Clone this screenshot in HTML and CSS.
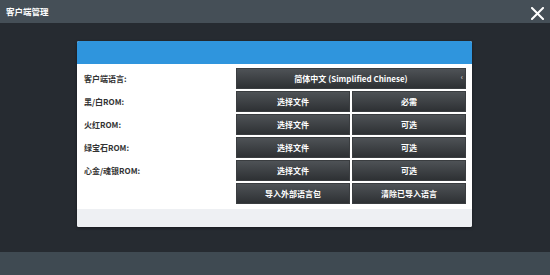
FILE: index.html
```html
<!DOCTYPE html>
<html lang="zh-CN">
<head>
  <meta charset="UTF-8">
  <title>客户端管理</title>
  <link rel="stylesheet" href="styles.css">
</head>
<body>
  <div class="topbar">
    <span class="title">客户端管理</span>
    <svg class="close" width="13" height="13" viewBox="0 0 13 13">
      <path d="M1 1 L12 12 M12 1 L1 12" stroke="#fff" stroke-width="2" stroke-linecap="square"/>
    </svg>
  </div>
  <div class="main">
    <div class="dialog">
      <div class="dialog-head"></div>
      <div class="dialog-body">
        <div class="row">
          <span class="label">客户端语言:</span>
          <div class="btns">
            <button class="btn">简体中文 (Simplified Chinese)<span class="caret">‹</span></button>
          </div>
        </div>
        <div class="row">
          <span class="label">黑/白ROM:</span>
          <div class="btns">
            <button class="btn">选择文件</button>
            <button class="btn">必需</button>
          </div>
        </div>
        <div class="row">
          <span class="label">火红ROM:</span>
          <div class="btns">
            <button class="btn">选择文件</button>
            <button class="btn">可选</button>
          </div>
        </div>
        <div class="row">
          <span class="label">绿宝石ROM:</span>
          <div class="btns">
            <button class="btn">选择文件</button>
            <button class="btn">可选</button>
          </div>
        </div>
        <div class="row">
          <span class="label">心金/魂银ROM:</span>
          <div class="btns">
            <button class="btn">选择文件</button>
            <button class="btn">可选</button>
          </div>
        </div>
        <div class="row">
          <span class="label"></span>
          <div class="btns">
            <button class="btn">导入外部语言包</button>
            <button class="btn">清除已导入语言</button>
          </div>
        </div>
      </div>
      <div class="dialog-foot"></div>
    </div>
  </div>
  <div class="bottombar"></div>
</body>
</html>
```

FILE: styles.css
```css
body {
  margin: 0;
  width: 550px;
  height: 275px;
  display: flex;
  flex-direction: column;
  font-family: "Noto Sans CJK SC", "Noto Sans", sans-serif;
  background-color: #262b31;
  overflow: hidden;
}

.topbar {
  height: 23px;
  flex-shrink: 0;
  background-color: #454f57;
  display: flex;
  align-items: center;
  justify-content: space-between;
  padding: 0 6px;
}

.title {
  color: #fff;
  font-size: 8.5px;
  font-weight: bold;
  margin-top: -1px;
}

.close {
  margin-top: 3px;
}

.main {
  flex: 1;
  padding-top: 18px;
  padding-left: 77px;
}

.bottombar {
  height: 23px;
  flex-shrink: 0;
  background-color: #3f4a52;
}

.dialog {
  width: 395px;
  background-color: #fff;
  border-radius: 2px;
  overflow: hidden;
  box-shadow: 0 1px 3px rgba(0, 0, 0, 0.4);
}

.dialog-head {
  height: 23px;
  background-color: #2f95dd;
}

.dialog-body {
  padding: 4px 6px 5px 7px;
  display: flex;
  flex-direction: column;
  gap: 2px;
}

.dialog-foot {
  height: 18px;
  background-color: #eef0f3;
}

.row {
  display: flex;
  height: 21px;
  align-items: center;
}

.label {
  width: 152px;
  font-size: 8px;
  font-weight: bold;
  color: #333;
}

.btns {
  flex: 1;
  display: flex;
  gap: 2px;
  height: 100%;
}

.btn {
  flex: 1;
  position: relative;
  border: none;
  padding: 0;
  font-family: inherit;
  font-size: 8px;
  font-weight: bold;
  color: #fff;
  background: linear-gradient(#505458, #2c2f32);
  box-shadow: inset 0 0 0 1px #3a3d40;
}

.caret {
  position: absolute;
  right: 3px;
  top: 4px;
  font-size: 7px;
  color: #ccc;
}
```
